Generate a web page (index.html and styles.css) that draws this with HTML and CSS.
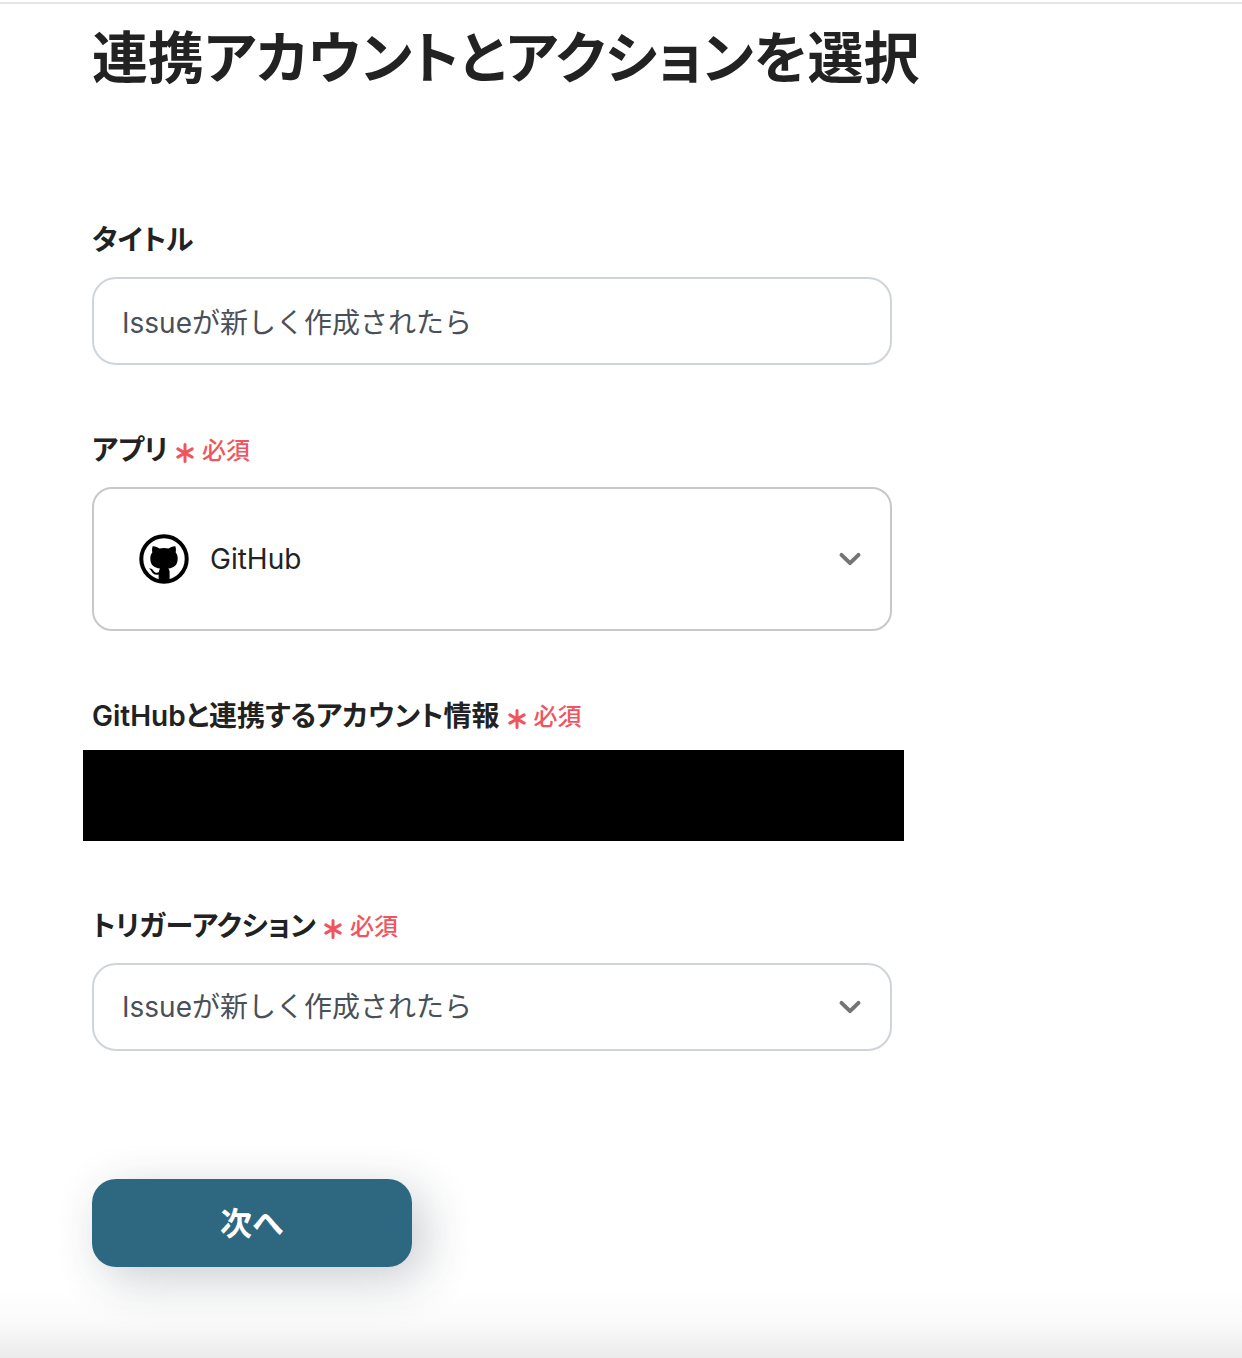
FILE: index.html
```html
<!DOCTYPE html>
<html lang="ja">
<head>
    <meta charset="UTF-8">
    <meta name="viewport" content="width=device-width, initial-scale=1.0">
    <title>連携アカウントとアクションを選択</title>
    <link rel="stylesheet" href="styles.css">
</head>
<body>

    <svg class="defs" aria-hidden="true">
        <symbol id="asterisk" viewBox="0 0 18 20">
            <path d="M9 1.5v17M1.8 5.9l14.4 8.2M16.2 5.9L1.8 14.1" fill="none" stroke="currentColor" stroke-width="3" stroke-linecap="round"/>
        </symbol>
        <symbol id="chevron" viewBox="0 0 24 24">
            <path d="M3.5 7.8l8.500 8.400 8.500-8.400" fill="none" stroke="currentColor" stroke-width="4" stroke-linecap="round" stroke-linejoin="round"/>
        </symbol>
    </svg>

    <header class="topbar"></header>

    <main class="content">
        <h1>連携アカウントとアクションを選択</h1>

        <form class="form">
            <div class="field">
                <label class="label" for="title">タイトル</label>
                <input class="control" type="text" id="title" value="Issueが新しく作成されたら">
            </div>

            <div class="field">
                <label class="label" for="app">アプリ
                    <span class="required"><svg class="star"><use href="#asterisk"/></svg>必須</span>
                </label>
                <div class="select-box">
                    <select class="control control-app" id="app">
                        <option>GitHub</option>
                    </select>
                    <svg class="app-icon" viewBox="0 0 50 50" aria-hidden="true">
                        <circle cx="25" cy="25" r="22.7" fill="#fff" stroke="#000" stroke-width="4"/>
                        <path d="M13.700 12.200c2.500-.2 5 1 6.700 2.200 2.900-.7 6.300-.7 9.200 0 1.700-1.200 4.200-2.400 6.700-2.200.9 2.200.8 4.400.3 6 1.500 1.800 2.100 3.700 2.100 6.200 0 6.600-3.600 9.300-9.400 10 1 1 1.300 2.200 1.300 3.800V47H19.600v-6.400c-4.300.7-5.800-.9-7-3.100-.6-1.200-1.500-2.100-2.700-2.900 3.200-.6 4 1.500 5.100 2.800 1.300 1.500 3.100 1.400 4.800.9.200-1.400.5-2.700 1.200-3.900-5.800-.7-9.700-3.400-9.700-10 0-2.500.6-4.400 2.100-6.200-.5-1.600-.6-3.800.3-6z"/>
                    </svg>
                    <svg class="arrow"><use href="#chevron"/></svg>
                </div>
            </div>

            <div class="field">
                <div class="label">GitHubと連携するアカウント情報
                    <span class="required"><svg class="star"><use href="#asterisk"/></svg>必須</span>
                </div>
                <div class="account"></div>
            </div>

            <div class="field">
                <label class="label" for="trigger">トリガーアクション
                    <span class="required"><svg class="star"><use href="#asterisk"/></svg>必須</span>
                </label>
                <div class="select-box">
                    <select class="control" id="trigger">
                        <option>Issueが新しく作成されたら</option>
                    </select>
                    <svg class="arrow"><use href="#chevron"/></svg>
                </div>
            </div>

            <button class="next" type="button">次へ</button>
        </form>
    </main>

    <footer class="fade"></footer>

</body>
</html>
```

FILE: styles.css
```css
* {
    box-sizing: border-box;
}

body {
    margin: 0;
    min-height: 100vh;
    display: flex;
    flex-direction: column;
    background: #fff;
    color: #222;
    font-family: Inter, "Noto Sans CJK JP", sans-serif;
    font-size: 28px;
}

.defs {
    display: none;
}

.topbar {
    height: 4px;
    border-bottom: 2px solid #e5e5e5;
}

.content {
    padding: 12px 92px 0;
}

h1 {
    margin: 0 0 119px;
    font-size: 56px;
    font-weight: 600;
    line-height: 84px;
    font-feature-settings: "palt";
}

/* form */
.form {
    display: flex;
    flex-direction: column;
    gap: 64px;
    max-width: 800px;
}

.field {
    display: flex;
    flex-direction: column;
    gap: 16px;
}

.label {
    display: flex;
    align-items: center;
    gap: 8px;
    font-weight: 600;
    line-height: 42px;
    font-feature-settings: "palt";
}

.required {
    display: flex;
    align-items: center;
    gap: 8px;
    color: #f0555f;
    font-size: 24px;
    font-weight: 500;
    line-height: 40px;
    padding-top: 2px;
}

.star {
    width: 18px;
    height: 20px;
    margin-top: 4px;
}

.control {
    width: 100%;
    height: 88px;
    padding: 0 72px 0 28px;
    border: 2px solid #ced4da;
    border-radius: 24px;
    background: #fff;
    color: #495057;
    font: inherit;
    appearance: none;
}

.control-app {
    height: 144px;
    padding-left: 116px;
    border-color: #c8c8c8;
    border-radius: 20px;
    color: #222;
}

/* icons share one grid cell with the select */
.select-box {
    display: grid;
    align-items: center;
}

.select-box > * {
    grid-area: 1 / 1;
}

.app-icon {
    width: 50px;
    height: 50px;
    margin-left: 47px;
    pointer-events: none;
}

.arrow {
    width: 24px;
    height: 24px;
    margin-right: 30px;
    justify-self: end;
    color: #757575;
    pointer-events: none;
}

.account {
    height: 91px;
    margin: -3px -12px 0 -9px;
    background: #000;
}

.next {
    width: 320px;
    height: 88px;
    margin-top: 64px;
    padding: 0 0 4px;
    border: none;
    border-radius: 24px;
    background: #2e6880;
    box-shadow: 12px 12px 48px rgba(33, 48, 60, 0.24);
    color: #fff;
    font: inherit;
    font-size: 32px;
    font-weight: 600;
}

.fade {
    height: 72px;
    margin-top: auto;
    background: linear-gradient(rgba(0, 0, 0, 0), rgba(0, 0, 0, 0.02) 50%, rgba(0, 0, 0, 0.08));
}
```
